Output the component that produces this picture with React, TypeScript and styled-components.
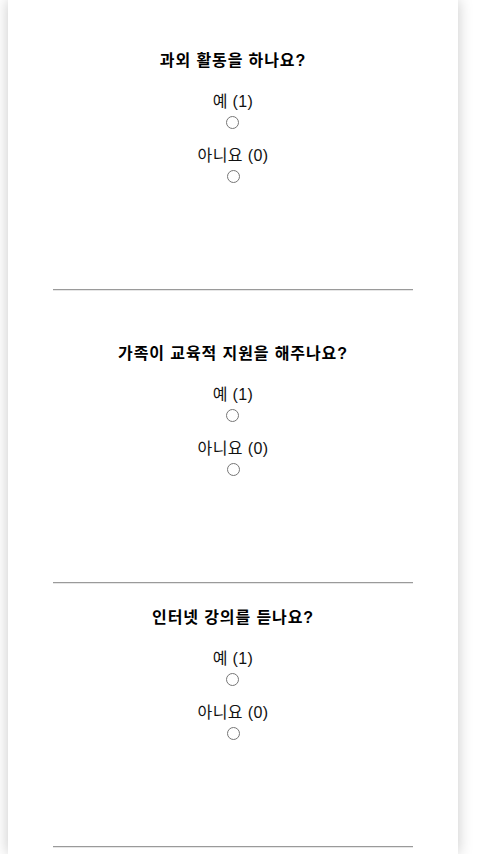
import React from "react";
import styled, { createGlobalStyle } from "styled-components";

const GlobalStyle = createGlobalStyle`
  html, body {
    margin: 0;
    padding: 0;
    background: #ffffff;
  }
  body {
    padding: 0 8px;
    font-family: "Liberation Sans", "Noto Sans CJK KR", sans-serif;
    color: #000;
  }
`;

const Panel = styled.main`
  width: 450px;
  min-height: 854px;
  background: #fff;
  box-shadow: 0 0 14px rgba(0, 0, 0, 0.22);
  display: flex;
  flex-direction: column;
  align-items: center;
`;

const Section = styled.section<{ $top: number }>`
  width: 100%;
  padding-top: ${(p) => p.$top}px;
  padding-bottom: 106px;
  display: flex;
  flex-direction: column;
  align-items: center;
`;

const Title = styled.h3`
  margin: 0 0 19px;
  font-size: 16px;
  font-weight: 700;
  line-height: 22px;
  letter-spacing: 0.9px;
  text-align: center;
`;

const Option = styled.label`
  display: flex;
  flex-direction: column;
  align-items: center;
  margin-bottom: 16px;
  font-size: 16px;
  line-height: 22px;
  letter-spacing: 0.4px;
  color: #111;
  &:last-child {
    margin-bottom: 0;
  }
`;

const Radio = styled.input.attrs({ type: "radio" })`
  display: block;
  width: 13px;
  height: 13px;
  margin: 3px 0 0;
  accent-color: #767676;
`;

const Divider = styled.hr`
  width: 360px;
  margin: 0;
  border: none;
  border-top: 1px solid #9a9a9a;
  border-bottom: 1px solid #e6e6e6;
  height: 0;
`;

const questions = [
  { name: "q1", title: "과외 활동을 하나요?", top: 50 },
  { name: "q2", title: "가족이 교육적 지원을 해주나요?", top: 52 },
  { name: "q3", title: "인터넷 강의를 듣나요?", top: 23 },
];

export default function App() {
  return (
    <>
      <GlobalStyle />
      <Panel>
        {questions.map((q) => (
          <React.Fragment key={q.name}>
            <Section $top={q.top}>
              <Title>{q.title}</Title>
              <Option>
                예 (1)
                <Radio name={q.name} value="1" />
              </Option>
              <Option>
                아니요 (0)
                <Radio name={q.name} value="0" />
              </Option>
            </Section>
            <Divider />
          </React.Fragment>
        ))}
      </Panel>
    </>
  );
}
